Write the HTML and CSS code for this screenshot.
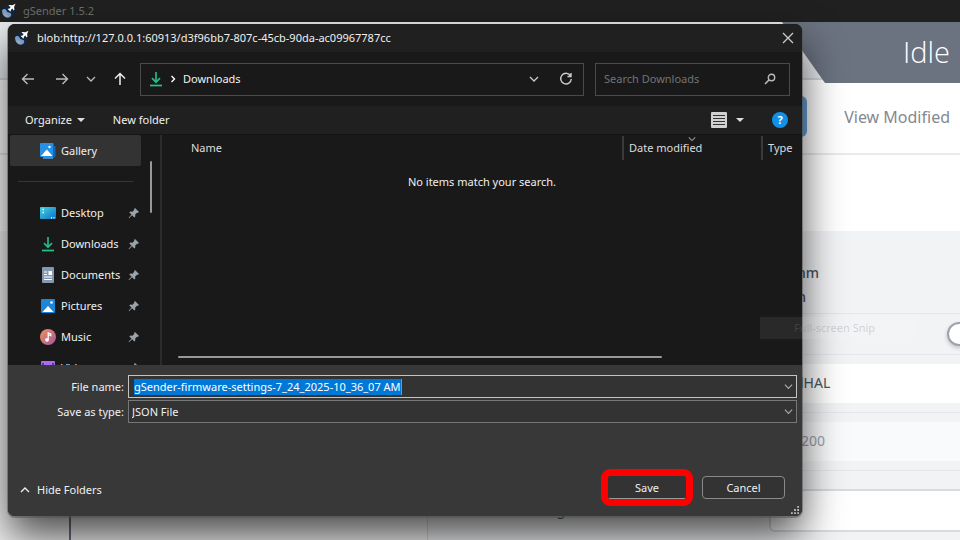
FILE: index.html
```html
<!DOCTYPE html>
<html lang="en">
<head>
<meta charset="utf-8">
<title>gSender 1.5.2</title>
<link rel="stylesheet" href="styles.css">
</head>
<body>
<svg class="defs" aria-hidden="true">
  <symbol id="logo" viewBox="0 0 16 16">
    <circle cx="7.500" cy="8.500" r="6.500" fill="#14253f"/>
    <path d="M1 7.500c1-1.500 3-1.800 4-.8s.6 2 2 2.600 3 .4 3.200 2-1 3.300-3.200 3.500C3.500 14.600 1 12 1 7.500z" fill="#6f9fd0"/>
    <path d="M2.500 10l3 .8 1.600 2.400-1.800.8C3.600 13.200 2.600 11.800 2.500 10z" fill="#b5a3a8"/>
    <path d="M14.500.8l-3.200 1.500-3-.3-.8.800 2.200 1.200-1.500 1.700-1.500.1.500 1 1.200.8.700 1.200.7-.7.200-1.400 1.400-1.200 1.200 2 .8-.8-.3-2.800z" fill="#fff"/>
  </symbol>
  <symbol id="pin" viewBox="0 0 12 12">
    <path d="M7 1l4 4-1 .8-.9-.1-1.900 1.900.1 2-1 .9-2.200-2.200L1 11.200l-.4-.4 2.900-3.200L1.300 5.500l1-.9 2.200.1 1.800-1.900L6.200 1.800z" fill="#9aa3aa"/>
  </symbol>
  <symbol id="chev" viewBox="0 0 10 10">
    <path d="M1 3l4 4 4-4" fill="none" stroke="currentColor" stroke-width="1.300"/>
  </symbol>
  <symbol id="down" viewBox="0 0 14 16">
    <path d="M7 1v10M3 7.200l4 4 4-4" fill="none" stroke="#22b98c" stroke-width="1.700"/>
    <path d="M1 14.500h12" stroke="#26c487" stroke-width="1.700"/>
  </symbol>
  <symbol id="picture" viewBox="0 0 16 16">
    <rect x="1" y="1" width="14" height="14" rx="1" fill="#1c86d8"/>
    <path d="M2.500 14L8 8l5.500 6z" fill="#fff"/>
    <circle cx="11.500" cy="4.500" r="1.300" fill="#fff"/>
  </symbol>
</svg>

<div class="app">
  <header class="app-title">
    <svg class="i16"><use href="#logo"/></svg>
    <span>gSender 1.5.2</span>
  </header>
  <div class="app-status"><span class="state">Idle</span></div>
  <div class="app-tools">
    <span class="blue-button"></span>
    <span class="modified">View Modified</span>
  </div>
  <div class="app-blank"></div>
  <div class="app-main">
    <aside class="rail"></aside>
    <aside class="jog"></aside>
    <section class="settings">
      <div class="row units"><span>mm</span><span>in</span></div>
      <div class="row toggle-row"><span class="toggle"></span></div>
      <div class="row"><span class="value">grblHAL</span></div>
      <div class="row"><span class="value muted">115200</span></div>
      <div class="row last"><span class="label">g</span><span class="value boxed"></span></div>
    </section>
  </div>
</div>

<main class="dialog">
  <header class="titlebar">
    <svg class="i16"><use href="#logo"/></svg>
    <span>blob:http://127.0.0.1:60913/d3f96bb7-807c-45cb-90da-ac09967787cc</span>
    <button class="close" aria-label="Close"><svg viewBox="0 0 12 12"><path d="M1 1l10 10M11 1L1 11" fill="none" stroke="currentColor" stroke-width="1.300"/></svg></button>
  </header>

  <nav class="navbar">
    <div class="arrows">
      <button aria-label="Back"><svg viewBox="0 0 14 14"><path d="M13 7H1.500M6.500 2l-5 5 5 5" fill="none" stroke="currentColor" stroke-width="1.400"/></svg></button>
      <button aria-label="Forward"><svg viewBox="0 0 14 14"><path d="M1 7h11.500M7.500 2l5 5-5 5" fill="none" stroke="currentColor" stroke-width="1.400"/></svg></button>
      <button class="small" aria-label="Recent locations"><svg><use href="#chev"/></svg></button>
      <button class="bright" aria-label="Up"><svg viewBox="0 0 14 14"><path d="M7 13V1.500M2 6.500l5-5 5 5" fill="none" stroke="currentColor" stroke-width="1.500"/></svg></button>
    </div>
    <div class="address">
      <svg class="dl"><use href="#down"/></svg>
      <svg class="crumb" viewBox="0 0 8 8"><path d="M2.500 1l3 3-3 3" fill="none" stroke="#fff" stroke-width="1.400"/></svg>
      <span class="place">Downloads</span>
      <button class="small" aria-label="Previous locations"><svg><use href="#chev"/></svg></button>
      <button aria-label="Refresh"><svg viewBox="0 0 14 14"><path d="M11.300 3.500A5.300 5.300 0 1 0 12.300 7M12 1v3.500H8.500" fill="none" stroke="currentColor" stroke-width="1.400"/></svg></button>
    </div>
    <div class="search">
      <input type="search" placeholder="Search Downloads" aria-label="Search Downloads">
      <svg viewBox="0 0 12 12"><circle cx="7.500" cy="4.500" r="3.200" fill="none" stroke="currentColor" stroke-width="1.400"/><path d="M5.200 6.800L1 11" stroke="currentColor" stroke-width="1.600"/></svg>
    </div>
  </nav>

  <div class="commands">
    <button>Organize <i class="tri"></i></button>
    <button class="new">New folder</button>
    <button class="view" aria-label="Change your view">
      <svg viewBox="0 0 16 16"><rect x="0" y="0" width="16" height="16" rx="1" fill="#d0d0d0"/><path d="M2 3.500h12M2 6.500h12M2 9.500h12M2 12.500h12" stroke="#333" stroke-width="1.200"/></svg>
      <i class="tri"></i>
    </button>
    <button class="help" aria-label="Help">?</button>
  </div>

  <div class="browser">
    <div class="tree">
      <a class="node selected" href="#gallery">
        <svg class="i16" viewBox="0 0 16 16"><path d="M14 3h1.500v10.500L13 15.500H3V14h11z" fill="#1467b8"/><rect x="0" y="0" width="13.500" height="14" rx="1" fill="#2590e4"/><path d="M1 13l5.800-6.500 5.700 6.500z" fill="#fff"/><circle cx="9.500" cy="4" r="1.200" fill="#fff"/><path d="M3 15h10" stroke="#69b3ee" stroke-width="1"/></svg>
        <span>Gallery</span>
      </a>
      <hr>
      <a class="node" href="#desktop">
        <svg class="i16" viewBox="0 0 16 16"><defs><linearGradient id="dg" x2="1" y2="1"><stop stop-color="#46d3df"/><stop offset="1" stop-color="#0a72c8"/></linearGradient></defs><rect y="2" width="16" height="12" rx="1" fill="url(#dg)"/><path d="M2.500 4.500h1.500M2.500 7.500h1.500M11 12.700h1M13.500 12.700h1" stroke="#fff" stroke-width="1.500"/></svg>
        <span>Desktop</span><svg class="pin"><use href="#pin"/></svg>
      </a>
      <a class="node" href="#downloads"><svg class="i16"><use href="#down"/></svg><span>Downloads</span><svg class="pin"><use href="#pin"/></svg></a>
      <a class="node" href="#documents">
        <svg class="i16" viewBox="0 0 16 16"><rect x="2" width="12" height="16" rx="1" fill="#8499b0"/><path d="M4 5h3M4 7.500h3M4 10h8M4 12.500h8" stroke="#fff" stroke-width="1.200"/><rect x="8.500" y="4" width="3.500" height="4" fill="#fff"/></svg>
        <span>Documents</span><svg class="pin"><use href="#pin"/></svg>
      </a>
      <a class="node" href="#pictures"><svg class="i16"><use href="#picture"/></svg><span>Pictures</span><svg class="pin"><use href="#pin"/></svg></a>
      <a class="node" href="#music">
        <svg class="i16" viewBox="0 0 16 16"><defs><linearGradient id="mg" x2="1" y2="1"><stop stop-color="#f0925a"/><stop offset="1" stop-color="#a4559f"/></linearGradient></defs><circle cx="8" cy="8" r="8" fill="url(#mg)"/><path d="M8.200 10.500V3.800l2.600 1v1.800l-2.400-.8" fill="none" stroke="#fff" stroke-width="1.200"/><circle cx="7" cy="10.800" r="1.900" fill="#fff"/></svg>
        <span>Music</span><svg class="pin"><use href="#pin"/></svg>
      </a>
      <a class="node" href="#videos">
        <svg class="i16" viewBox="0 0 16 16"><rect x="1" y="1" width="14" height="14" rx="1" fill="#a96bf0"/><path d="M3 3v10M13 3v10" stroke="#4b1f86" stroke-width="1.500" stroke-dasharray="2 1.500"/></svg>
        <span>Videos</span><svg class="pin"><use href="#pin"/></svg>
      </a>
      <i class="vbar"></i>
    </div>
    <div class="files">
      <table>
        <thead><tr><th class="name">Name</th><th class="date">Date modified<svg><use href="#chev"/></svg></th><th class="type">Type</th></tr></thead>
        <tbody><tr><td colspan="3">No items match your search.</td></tr></tbody>
      </table>
      <i class="hbar"></i>
    </div>
  </div>

  <form class="footer">
    <div class="fields">
      <label for="fname">File name:</label>
      <div class="combo active">
        <input id="fname" type="text" value="gSender-firmware-settings-7_24_2025-10_36_07 AM" spellcheck="false"><i class="caret"></i>
        <svg><use href="#chev"/></svg>
      </div>
      <label for="ftype">Save as type:</label>
      <div class="combo">
        <select id="ftype"><option>JSON File</option></select>
        <svg><use href="#chev"/></svg>
      </div>
    </div>
    <div class="actions">
      <button type="button" class="hide"><svg><use href="#chev"/></svg>Hide Folders</button>
      <button type="button" class="push save">Save</button>
      <button type="button" class="push">Cancel</button>
    </div>
    <svg class="grip" viewBox="0 0 9 9"><path d="M7 0h2v2H7zM7 3.500h2v2H7zM7 7h2v2H7zM3.500 3.500h2v2h-2zM3.500 7h2v2h-2zM0 7h2v2H0z" fill="#bbb"/></svg>
  </form>
</main>

<div class="tooltip">Full-screen Snip</div>
<script src="script.js"></script>
</body>
</html>
```
FILE: styles.css
```css
* { box-sizing: border-box; }
body {
  margin: 0;
  font: 11px/16px "Noto Sans", "Open Sans", sans-serif;
  overflow: hidden;
  background: #f2f3f5;
}
button, input, select { font: inherit; color: inherit; background: none; border: 0; padding: 0; margin: 0; }
svg { flex: none; }
.defs { position: absolute; width: 0; height: 0; }
.i16 { width: 16px; height: 16px; }

/* application behind the dialog */
.app { display: flex; flex-direction: column; height: 100vh; }
.app-title {
  display: flex; align-items: center; gap: 6px;
  flex: 0 0 22px; padding-left: 1px;
  background: #202020; color: #6f6f6f;
}
.app-status {
  position: relative;
  flex: 0 0 58px; background: #e9ebef; border-bottom: 2px solid #d5d8df;
}
.state {
  position: absolute; top: 0; right: 0;
  width: 178px; height: 61px; padding-right: 10px;
  font: 29px/60px "Open Sans", sans-serif; font-weight: 300; text-align: right;
  color: #fff; background: #6b7280;
  clip-path: polygon(0 0, 100% 0, 100% 100%, 43px 100%);
}
.app-tools {
  display: flex; align-items: center; justify-content: flex-end; gap: 37px;
  flex: 0 0 75px; padding-right: 10px;
  background: #fff; border-bottom: 2px solid #e8eaed;
}
.blue-button { width: 100px; height: 41px; border-radius: 6px; background: #69a3dc; }
.modified { font-size: 16px; line-height: 24px; color: #85888f; }
.app-blank { flex: 0 0 76px; background: #fff; }
.app-main { display: flex; flex: 1; min-height: 0; }
.rail { width: 71px; border-right: 2px solid #6b7280; background: #f4f4f5; }
.jog { width: 357px; border-right: 1px solid #d5d8dd; background: #f4f4f5; }
.settings { flex: 1; margin-left: 38px; background: #f2f3f5; }
.row {
  display: flex; align-items: center; justify-content: flex-end;
  height: 58px; border-bottom: 1px solid #e5e7eb;
  font-size: 14px; line-height: 24px; color: #4b5563;
}
.row.units {
  flex-direction: column; align-items: flex-end; justify-content: flex-end;
  height: 83px; padding: 0 141px 4px 0; font-weight: 500;
}
.units span:last-child { padding-right: 13px; }
.toggle-row { height: 41px; overflow: hidden; }
.toggle { width: 24px; height: 24px; margin-right: -11px; border: 2px solid #9ca3af; border-radius: 50%; background: #fff; box-shadow: 0 2px 4px #0003; }
.value { width: 191px; height: 39px; padding: 7px 8px; background: #fff; }
.value.muted { background: #f9fafb; color: #9ca3af; }
.value.boxed { height: 43px; border: 2px solid #d8dbe1; border-right: 0; border-radius: 6px 0 0 6px; }
.row.last { height: 78px; border: 0; }
.label { margin-right: 204px; }

/* save dialog */
.dialog {
  position: absolute; top: 24px; left: 8px; right: 158px; z-index: 1;
  display: flex; flex-direction: column;
  color: #f0f0f0; background: #191919;
  border-radius: 7px;
  box-shadow: 0 1px 0 1px rgba(80, 80, 80, .5), 0 20px 40px rgba(0, 0, 0, .7);
}
.titlebar {
  display: flex; align-items: center; gap: 7px;
  height: 28px; padding: 0 8px 0 6px;
  background: #202020; border-radius: 7px 7px 0 0;
}
.close { display: flex; margin-left: auto; color: #ccc; }
.close svg { width: 12px; height: 12px; }
.navbar { display: flex; align-items: center; height: 54px; padding: 0 12px 0 13px; }
.arrows { display: flex; align-items: center; gap: 20px; width: 106px; margin-right: 13px; color: #bbb; }
.arrows .small { margin: 0 -3px; }
.arrows .bright { margin-left: 0; color: #eee; }
.arrows button, .address button { display: flex; }
.arrows svg, .address button svg { width: 14px; height: 14px; }
.arrows .small svg, .address .small svg { width: 10px; height: 10px; }
.address, .search { display: flex; align-items: center; height: 33px; border: 1px solid #4a4a4a; }
.address { flex: 1; padding: 0 10px 0 8px; gap: 6px; }
.address button { color: #ccc; }
.dl { width: 14px; height: 16px; }
.crumb { width: 8px; height: 8px; }
.place { flex: 1; }
.address .small { margin-right: 14px; }
.search { width: 195px; margin-left: 11px; padding: 0 13px 0 8px; color: #bbb; }
.search input { flex: 1; min-width: 0; outline: 0; }
.search input::placeholder { color: #737373; opacity: 1; }
.search svg { width: 12px; height: 12px; }
.commands {
  display: flex; align-items: center;
  height: 29px; padding: 0 14px 0 17px;
  background: #202020; border-bottom: 1px solid #151515;
}
.tri { display: inline-block; border: 4px solid transparent; border-top: 4px solid #ddd; border-bottom: 0; vertical-align: 2px; margin-left: 2px; }
.new { margin-left: 28px; }
.view { display: flex; align-items: center; gap: 7px; margin-left: auto; margin-right: 28px; }
.view svg { width: 16px; height: 16px; }
.help { width: 16px; height: 16px; border-radius: 50%; background: #1290e8; color: #fff; font-weight: 700; }

.browser { display: flex; height: 230px; overflow: hidden; }
.tree { position: relative; width: 154px; padding: 0 19px 0 2px; border-right: 2px solid #2b2b2b; }
.node { display: flex; align-items: center; gap: 5px; height: 31px; padding: 0 1px 0 30px; color: inherit; text-decoration: none; }
.node span { flex: 1; }
.node.selected { background: #333; border-radius: 2px; }
.pin { width: 12px; height: 12px; }
.tree hr { height: 1px; margin: 15px 8px; border: 0; background: #363636; }
.vbar { position: absolute; top: 26px; right: 8px; width: 2px; height: 52px; background: #999; border-radius: 1px; }
.files { flex: 1; display: flex; flex-direction: column; justify-content: space-between; padding-top: 1px; }
table { width: 100%; border-collapse: collapse; table-layout: fixed; }
th { position: relative; height: 24px; padding: 0 0 0 5px; font-weight: 400; text-align: left; color: #ddd; border-left: 2px solid #3a3a3a; }
th.name { border: 0; padding-left: 29px; }
th.date { width: 139px; }
th.type { width: 40px; }
th svg { position: absolute; top: -1px; left: 64px; width: 8px; height: 8px; color: #999; }
td { height: 44px; text-align: center; }
.hbar { width: 484px; height: 2px; margin: 0 0 7px 16px; background: #999; border-radius: 1px; }

.footer { position: relative; padding: 10px 5px 17px; background: #383838; border-radius: 0 0 7px 7px; }
.fields { display: grid; grid-template-columns: 111px 1fr; column-gap: 4px; row-gap: 2px; align-items: center; }
.fields label { text-align: right; }
.combo { display: flex; align-items: center; height: 23px; padding: 0 3px; background: #333; border: 1px solid #777; }
.combo.active { padding-left: 5px; border-color: #c4c4c4; }
.combo svg { width: 9px; height: 9px; margin-left: auto; color: #aaa; }
.combo input { field-sizing: content; outline: 0; }
.combo select { flex: 1; appearance: none; outline: 0; }
.combo input::selection { color: #fff; background: #0078d7; }
.caret { width: 1px; height: 16px; background: #e07a20; }
.actions { display: flex; align-items: center; margin-top: 53px; padding: 0 12px 0 7px; gap: 16px; }
.hide { display: flex; align-items: center; gap: 7px; margin: 4px auto 0 0; }
.hide svg { width: 10px; height: 10px; transform: rotate(180deg); }
.push { width: 83px; height: 23px; background: #333; border: 1px solid #8a8a8a; border-radius: 4px; }
.push.save { width: 78px; outline: 7px solid #f00; border-color: #333 #333 #999; border-radius: 2px; }
.grip { position: absolute; right: 3px; bottom: 2px; width: 8px; height: 8px; }

.tooltip {
  position: absolute; top: 317px; left: 760px; z-index: 2;
  padding: 3px 40px 3px 34px;
  color: rgba(125, 125, 125, .3);
  background: linear-gradient(90deg, rgba(255, 255, 255, .07) 42px, rgba(255, 255, 255, .05));
}
```
FILE: script.js
```js
const field = document.getElementById("fname");
field.focus();
field.select();
```
